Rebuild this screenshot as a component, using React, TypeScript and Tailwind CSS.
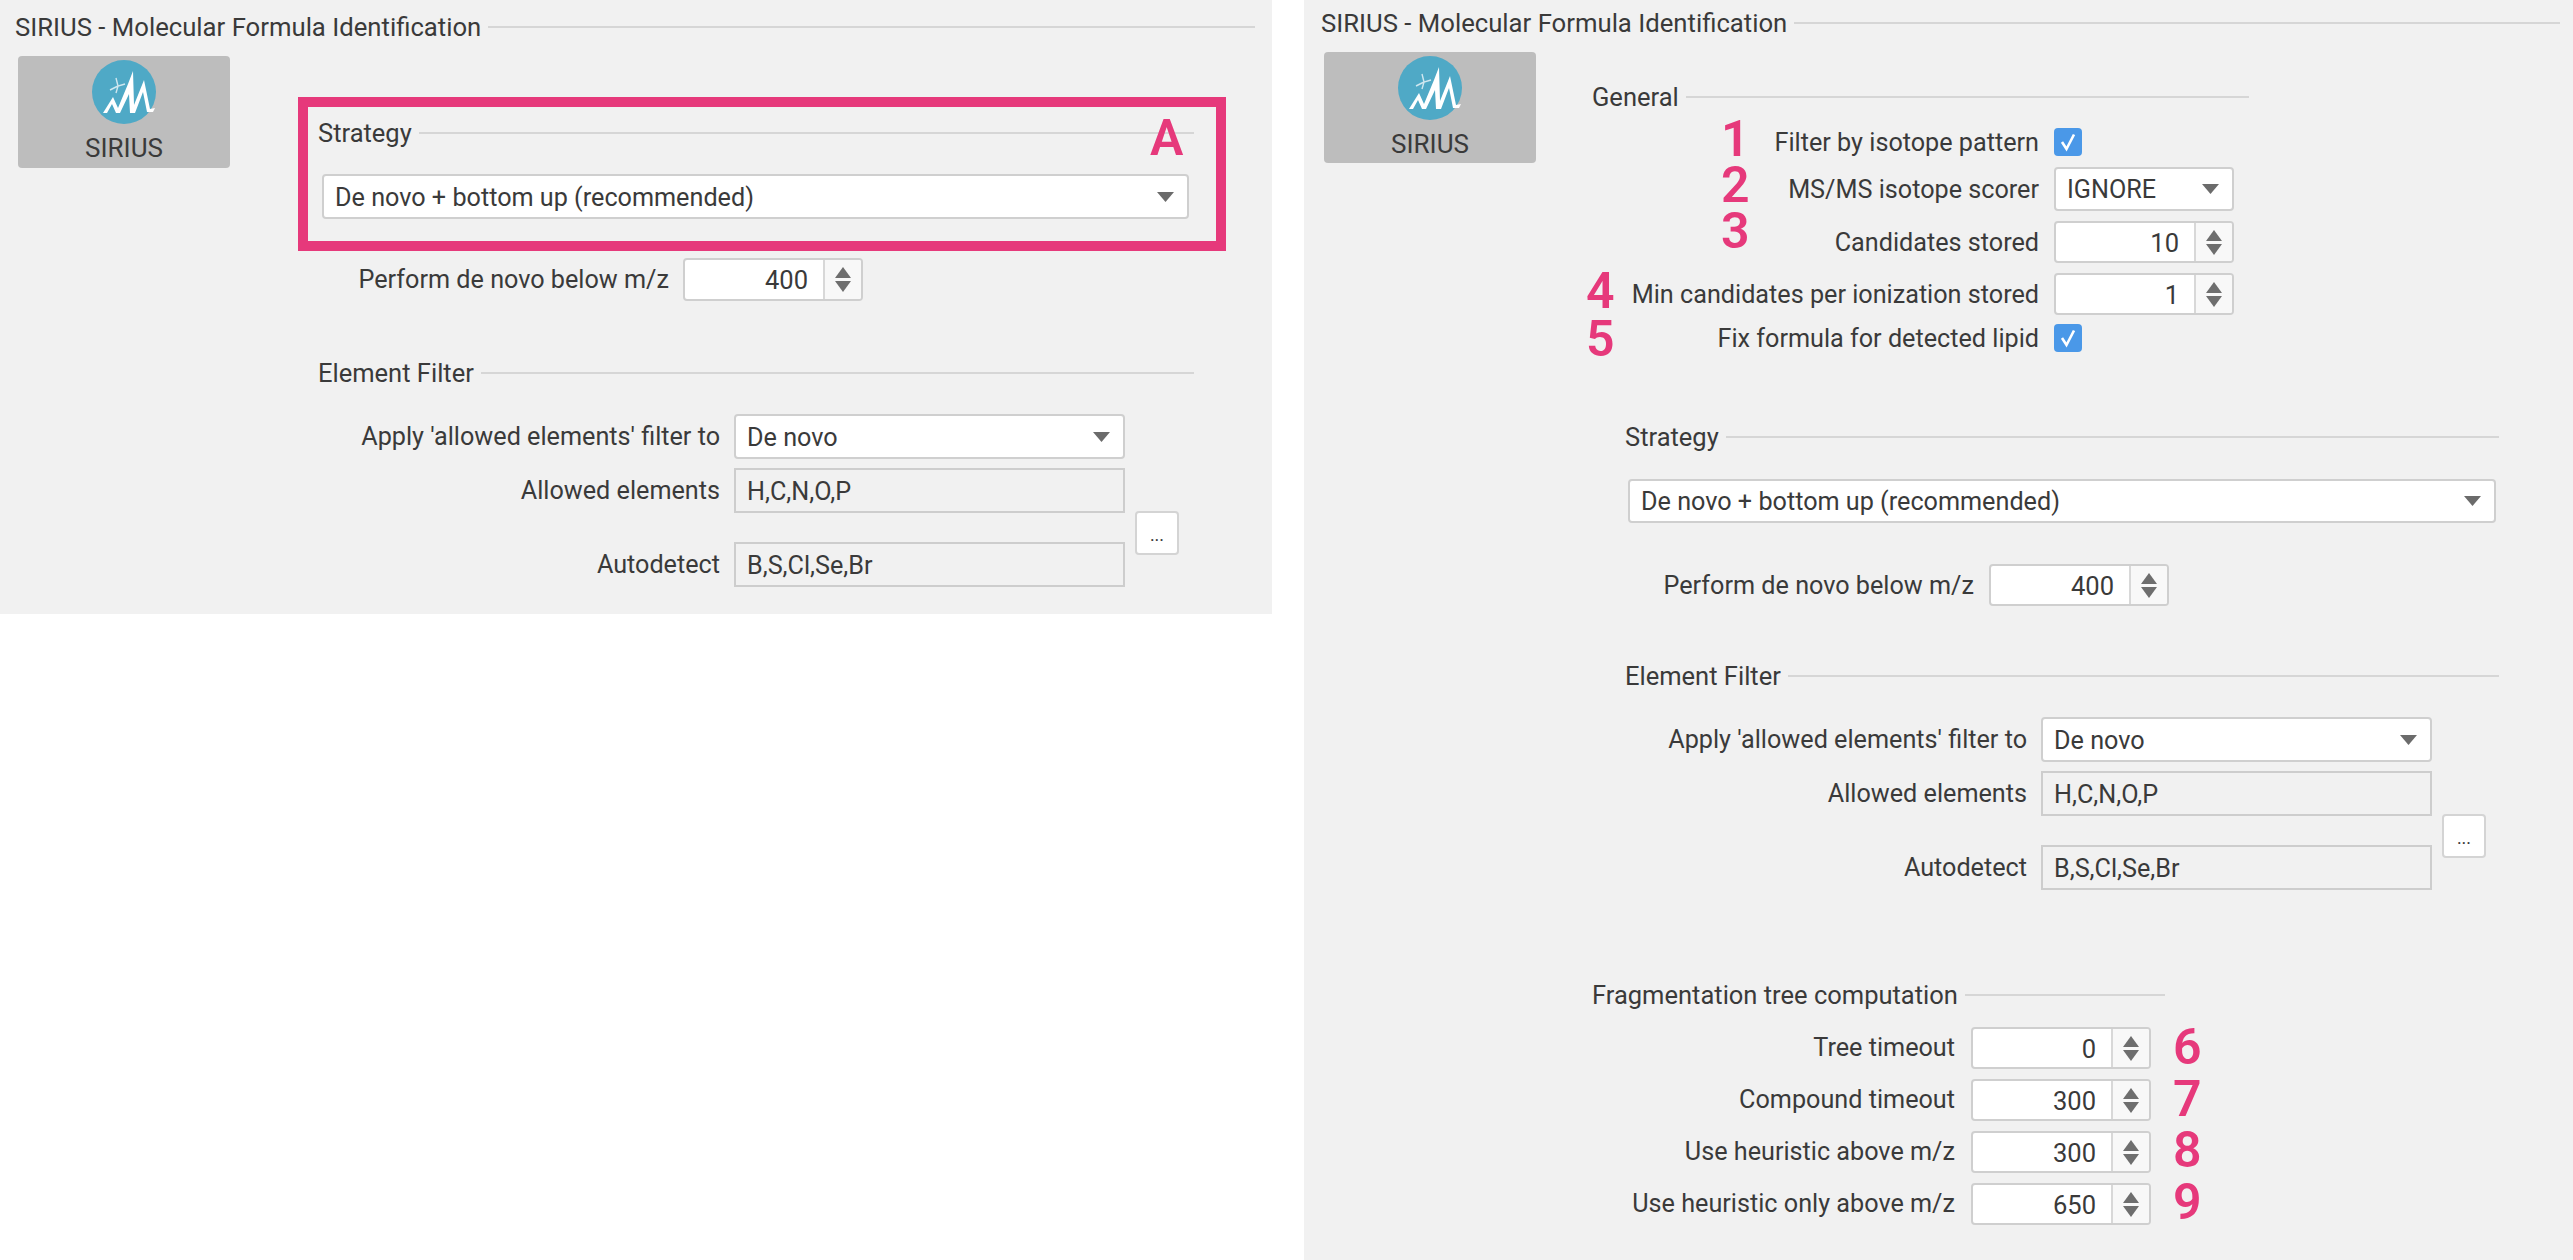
import React from 'react';

interface ClassProps {
  className?: string;
}

const SectionTitle: React.FC<{ title: string; className?: string }> = ({ title, className = '' }) => (
  <div className={`flex items-center gap-[7px] ${className}`}>
    <span className="whitespace-nowrap pt-[1px]">{title}</span>
    <div className="h-[2px] flex-1 bg-[#d6d6d6]" />
  </div>
);

const SiriusLogo = () => (
  <svg viewBox="0 0 64 64" className="h-[64px] w-[64px] shrink-0">
    <circle cx="32" cy="32" r="32" fill="#4fa9c6" />
    <path d="M11 53 L21 37 L26 48 L36 24 L41 11 L42 45 L52 20 L58 49 L63 48 L61 52 L55 52 L51 32 L43 53 L38 53 L37 34 L28 53 L24 53 L20 44 L15 53 Z" fill="#fff" />
    <path d="M24 18 L26 26 M18 30 L26 26 M33 24 L26 26 L24 33" stroke="#cfe7ef" strokeWidth="1.4" fill="none" />
  </svg>
);

const SiriusButton: React.FC<ClassProps> = ({ className = '' }) => (
  <div className={`flex shrink-0 flex-col items-center rounded-[4px] bg-[#bdbdbd] pt-[4px] ${className}`}>
    <SiriusLogo />
    <span className="mt-[6px] text-[26px] leading-[36px]">SIRIUS</span>
  </div>
);

const CaretDown = () => (
  <svg viewBox="0 0 17 10" className="h-[10px] w-[17px] shrink-0">
    <path d="M0 0 H17 L8.5 10 Z" fill="#6b6b6b" />
  </svg>
);

const Combo: React.FC<{ value: string; className?: string }> = ({ value, className = '' }) => (
  <div className={`flex items-center justify-between rounded-[4px] border-2 border-[#cfcfcf] bg-white pl-[11px] pr-[13px] ${className}`}>
    <span className="whitespace-nowrap pt-[2px]">{value}</span>
    <CaretDown />
  </div>
);

const Spinner: React.FC<{ value: string; className?: string }> = ({ value, className = '' }) => (
  <div className={`flex overflow-hidden rounded-[4px] border-2 border-[#cfcfcf] bg-white ${className}`}>
    <div className="flex flex-1 items-center justify-end pr-[15px] pt-[2px]">{value}</div>
    <div className="flex w-[38px] flex-col items-center justify-center gap-[3px] border-l-2 border-[#d8d8d8] bg-[#f8f8f8]">
      <svg viewBox="0 0 16 11" className="h-[11px] w-[16px]">
        <path d="M8 0 L16 11 H0 Z" fill="#6e6e6e" />
      </svg>
      <svg viewBox="0 0 16 11" className="h-[11px] w-[16px]">
        <path d="M0 0 H16 L8 11 Z" fill="#6e6e6e" />
      </svg>
    </div>
  </div>
);

const Checkbox = () => (
  <div className="flex h-[28px] w-[28px] items-center justify-center rounded-[4px] bg-[#4a98e8]">
    <svg viewBox="0 0 28 28" className="h-[28px] w-[28px]">
      <path d="M8 14 L12.5 21 L20 6.5" stroke="#fff" strokeWidth="2.6" fill="none" />
    </svg>
  </div>
);

const ReadOnlyField: React.FC<{ value: string }> = ({ value }) => (
  <div className="flex h-[45px] items-center border-2 border-[#cdcdcd] pl-[11px] pt-[2px] text-[25.2px]">{value}</div>
);

const ElementFilter: React.FC<ClassProps> = ({ className = '' }) => (
  <div className={className}>
    <SectionTitle title="Element Filter" className="h-[40px]" />
    <div className="mt-[21px] grid grid-cols-[402px_391px_44px] gap-x-[14px]">
      <div className="flex items-center justify-end whitespace-nowrap pt-[1px] text-[25.2px]">Apply 'allowed elements' filter to</div>
      <Combo value="De novo" className="h-[45px] text-[25.2px]" />
      <div />
    </div>
    <div className="mt-[9px] grid grid-cols-[402px_391px_44px] grid-rows-[45px_45px] gap-x-[14px] gap-y-[29px]">
      <div className="flex items-center justify-end pt-[1px] text-[25.2px]">Allowed elements</div>
      <ReadOnlyField value="H,C,N,O,P" />
      <div className="row-span-2 -ml-[4px] mt-[43px] flex h-[44px] w-[44px] items-center justify-center rounded-[4px] border-2 border-[#d4d4d4] bg-white pt-[2px] text-[18px]">
        ...
      </div>
      <div className="flex items-center justify-end pt-[1px] text-[25.2px]">Autodetect</div>
      <ReadOnlyField value="B,S,Cl,Se,Br" />
    </div>
  </div>
);

const Mark: React.FC<{ text: string; className: string }> = ({ text, className }) => (
  <span className={`absolute text-[50px] font-semibold leading-[36px] text-[#e6397b] ${className}`}>{text}</span>
);

const LeftPanel = () => (
  <div className="relative h-[614px] w-[1272px] shrink-0 bg-[#f1f1f1] pl-[15px]">
    <SectionTitle title="SIRIUS - Molecular Formula Identification" className="h-[54px] pr-[17px] text-[25.7px]" />
    <div className="flex">
      <SiriusButton className="ml-[3px] mt-[2px] h-[112px] w-[212px]" />
      <div className="ml-[68px] mt-[43px]">
        <div className="h-[154px] w-[928px] border-[10px] border-[#e6397b] pl-[10px] pr-[22px]">
          <SectionTitle title="Strategy" className="h-[52px]" />
          <Combo value="De novo + bottom up (recommended)" className="ml-[4px] mr-[5px] mt-[15px] h-[45px] text-[25.2px]" />
        </div>
        <div className="mt-[7px] flex h-[43px] items-stretch">
          <div className="flex w-[371px] items-center justify-end whitespace-nowrap pt-[1px] text-[25.2px]">Perform de novo below m/z</div>
          <Spinner value="400" className="ml-[14px] w-[180px]" />
        </div>
        <ElementFilter className="ml-[20px] mt-[52px] w-[876px]" />
      </div>
    </div>
    <Mark text="A" className="left-[1150px] top-[120px]" />
  </div>
);

const GeneralRow: React.FC<{ label: string; className?: string; children: React.ReactNode }> = ({ label, className = '', children }) => (
  <div className={`flex items-center ${className}`}>
    <div className="w-[447px] whitespace-nowrap pt-[1px] text-right text-[25.2px]">{label}</div>
    <div className="ml-[15px]">{children}</div>
  </div>
);

const TreeRow: React.FC<{ label: string; value: string; className?: string }> = ({ label, value, className = '' }) => (
  <div className={`flex h-[42px] items-stretch ${className}`}>
    <div className="flex w-[363px] items-center justify-end whitespace-nowrap text-[25.2px]">{label}</div>
    <Spinner value={value} className="ml-[16px] w-[180px]" />
  </div>
);

const RightPanel = () => (
  <div className="relative h-[1260px] flex-1 bg-[#f1f1f1] pl-[17px]">
    <SectionTitle title="SIRIUS - Molecular Formula Identification" className="h-[46px] pr-[13px] text-[25.7px]" />
    <div className="flex">
      <SiriusButton className="ml-[3px] mt-[6px] h-[111px] w-[212px]" />
      <div className="ml-[56px] mt-[31px] flex-1">
        <SectionTitle title="General" className="h-[40px] w-[657px]" />
        <GeneralRow label="Filter by isotope pattern" className="mt-[11px] h-[28px]">
          <Checkbox />
        </GeneralRow>
        <GeneralRow label="MS/MS isotope scorer" className="mt-[11px] h-[44px]">
          <Combo value="IGNORE" className="h-[44px] w-[180px] text-[25.2px]" />
        </GeneralRow>
        <GeneralRow label="Candidates stored" className="mt-[10px] h-[42px]">
          <Spinner value="10" className="h-[42px] w-[180px]" />
        </GeneralRow>
        <GeneralRow label="Min candidates per ionization stored" className="mt-[10px] h-[42px]">
          <Spinner value="1" className="h-[42px] w-[180px]" />
        </GeneralRow>
        <GeneralRow label="Fix formula for detected lipid" className="mt-[9px] h-[28px]">
          <Checkbox />
        </GeneralRow>

        <div className="ml-[33px] mt-[65px] w-[874px]">
          <SectionTitle title="Strategy" className="h-[40px]" />
          <Combo value="De novo + bottom up (recommended)" className="ml-[3px] mr-[3px] mt-[22px] h-[44px] text-[25.2px]" />
          <div className="mt-[41px] flex h-[42px] items-stretch">
            <div className="flex w-[349px] items-center justify-end whitespace-nowrap pt-[1px] text-[25.2px]">Perform de novo below m/z</div>
            <Spinner value="400" className="ml-[15px] w-[180px]" />
          </div>
        </div>
        <ElementFilter className="ml-[33px] mt-[50px] w-[874px]" />

        <SectionTitle title="Fragmentation tree computation" className="mt-[85px] h-[40px] w-[573px]" />
        <TreeRow label="Tree timeout" value="0" className="mt-[12px]" />
        <TreeRow label="Compound timeout" value="300" className="mt-[10px]" />
        <TreeRow label="Use heuristic above m/z" value="300" className="mt-[10px]" />
        <TreeRow label="Use heuristic only above m/z" value="650" className="mt-[10px]" />
      </div>
    </div>
    <Mark text="1" className="left-[417px] top-[121px]" />
    <Mark text="2" className="left-[417px] top-[167px]" />
    <Mark text="3" className="left-[417px] top-[213px]" />
    <Mark text="4" className="left-[282px] top-[273px]" />
    <Mark text="5" className="left-[282px] top-[321px]" />
    <Mark text="6" className="left-[869px] top-[1029px]" />
    <Mark text="7" className="left-[869px] top-[1081px]" />
    <Mark text="8" className="left-[869px] top-[1132px]" />
    <Mark text="9" className="left-[869px] top-[1184px]" />
  </div>
);

export default function App() {
  return (
    <div className="flex h-[1260px] w-[2573px] gap-[32px] overflow-hidden bg-white font-['Roboto',sans-serif] text-[25.5px] text-[#3a3a3a]">
      <LeftPanel />
      <RightPanel />
    </div>
  );
}
